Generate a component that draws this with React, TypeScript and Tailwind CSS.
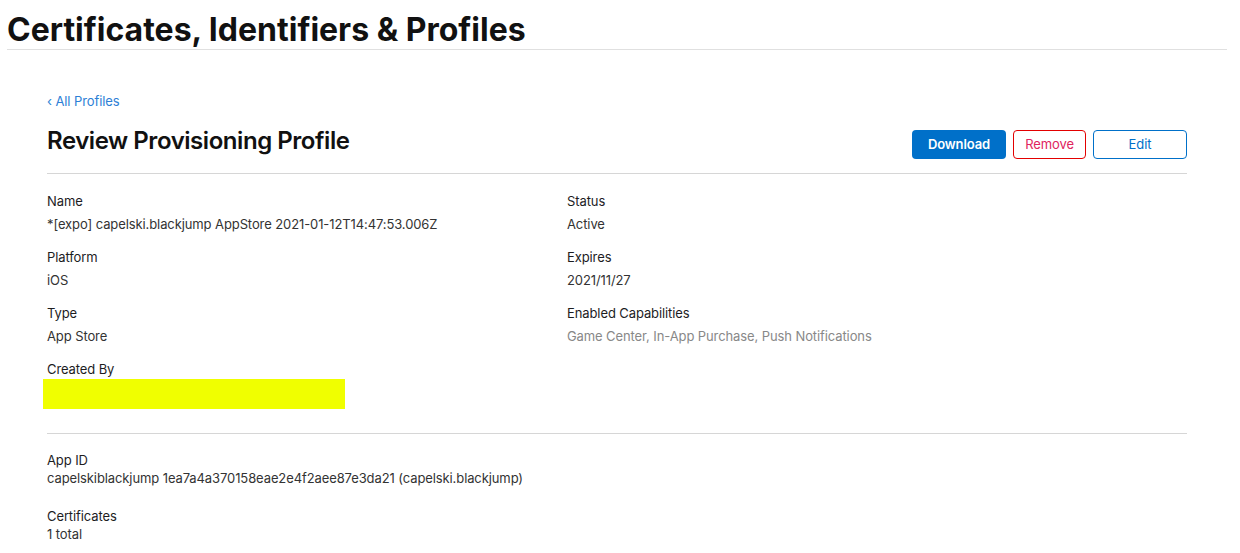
import React from 'react';

interface Field {
  label: string;
  value: string;
  muted?: boolean;
}

const LEFT: Field[] = [
  { label: 'Name', value: '*[expo] capelski.blackjump AppStore 2021-01-12T14:47:53.006Z' },
  { label: 'Platform', value: 'iOS' },
  { label: 'Type', value: 'App Store' },
];

const RIGHT: Field[] = [
  { label: 'Status', value: 'Active' },
  { label: 'Expires', value: '2021/11/27' },
  { label: 'Enabled Capabilities', value: 'Game Center, In-App Purchase, Push Notifications', muted: true },
];

function Item({ label, value, muted }: Field) {
  return (
    <div className="mb-[15px]">
      <div className="text-[13px] leading-[18px] text-[#1d1d1f]">{label}</div>
      <div className={`mt-[5px] text-[13px] leading-[18px] ${muted ? 'text-[#888]' : 'text-[#333]'}`}>{value}</div>
    </div>
  );
}

export default function App() {
  return (
    <div className="min-h-screen bg-white font-['Inter',sans-serif] tracking-[-0.1px] antialiased">
      <header className="ml-[7px] mr-[13px] border-b border-[#e0e0e0]">
        <h1 className="pt-[13px] pb-[2px] text-[32px] font-bold leading-[34px] tracking-normal text-[#111]">
          Certificates, Identifiers &amp; Profiles
        </h1>
      </header>

      <main className="pl-[47px] pr-[53px]">
        <a href="#" className="mt-[42px] block text-[13px] leading-[18px] text-[#2d7fd6]">
          ‹ All Profiles
        </a>

        <div className="mt-[20px] flex items-start justify-between border-b border-[#d6d6d6] pb-[14px]">
          <h2 className="-mt-[4px] mb-[4px] text-[24px] font-semibold leading-[29px] tracking-[-0.45px] text-[#111]">
            Review Provisioning Profile
          </h2>
          <div className="flex gap-[7px]">
            <button className="h-[29px] w-[94px] rounded-[4px] bg-[#0070c9] text-[13px] font-semibold text-white">
              Download
            </button>
            <button className="h-[29px] w-[73px] rounded-[4px] border border-[#e30000] text-[13px] text-[#e0245e]">
              Remove
            </button>
            <button className="h-[29px] w-[94px] rounded-[4px] border border-[#0070c9] text-[13px] text-[#0070c9]">
              Edit
            </button>
          </div>
        </div>

        <div className="grid grid-cols-[520px_1fr] pt-[18px]">
          <div>
            {LEFT.map(f => (
              <Item key={f.label} {...f} />
            ))}
            <div className="text-[13px] leading-[18px] text-[#1d1d1f]">Created By</div>
            <div className="-ml-[4px] mt-[1px] h-[30px] w-[302px] bg-[#f0ff00]" />
          </div>
          <div>
            {RIGHT.map(f => (
              <Item key={f.label} {...f} />
            ))}
          </div>
        </div>

        <div className="mt-[24px] border-t border-[#d6d6d6] pt-[17px]">
          <div className="mb-[20px]">
            <div className="text-[13px] leading-[18px] text-[#1d1d1f]">App ID</div>
            <div className="text-[13px] leading-[18px] text-[#333]">
              capelskiblackjump 1ea7a4a370158eae2e4f2aee87e3da21 (capelski.blackjump)
            </div>
          </div>
          <div>
            <div className="text-[13px] leading-[18px] text-[#1d1d1f]">Certificates</div>
            <div className="text-[13px] leading-[18px] text-[#333]">1 total</div>
          </div>
        </div>
      </main>
    </div>
  );
}
